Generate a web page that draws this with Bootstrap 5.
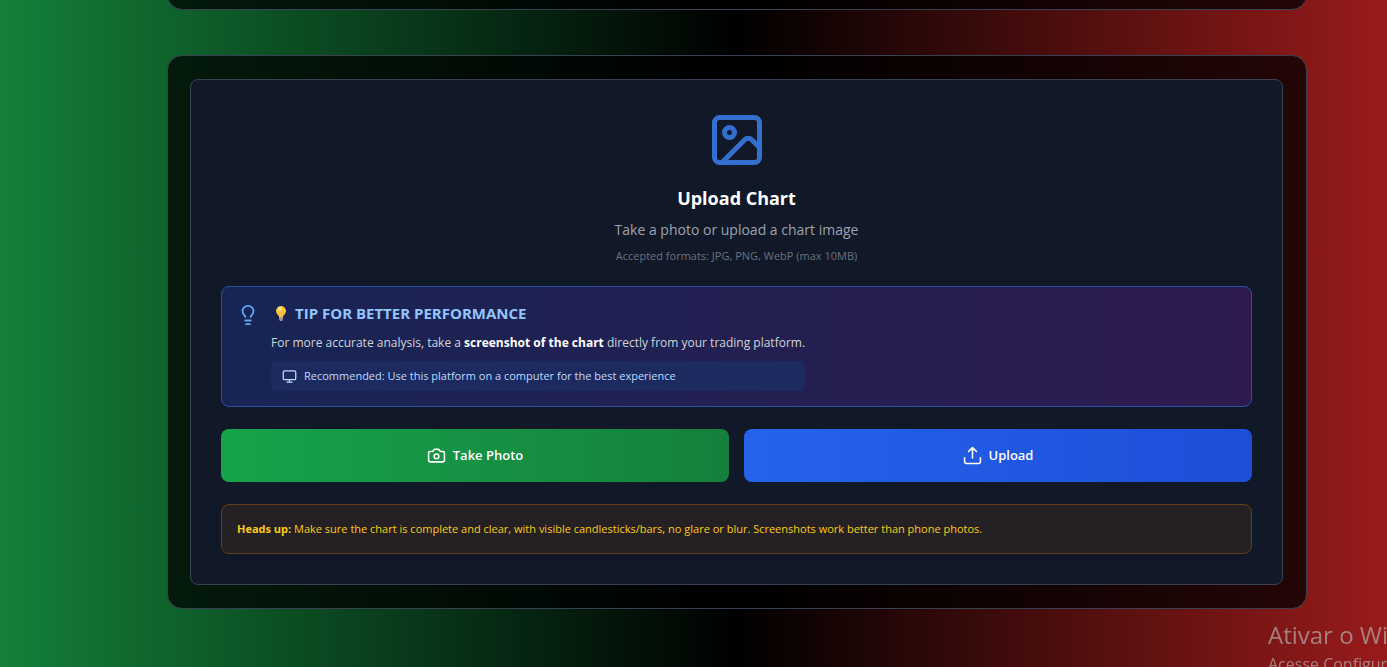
<!DOCTYPE html>
<html lang="en">
<head>
<meta charset="utf-8">
<meta name="viewport" content="width=device-width, initial-scale=1">
<title>Upload Chart</title>
<link href="https://cdn.jsdelivr.net/npm/bootstrap@5.3.0/dist/css/bootstrap.min.css" rel="stylesheet">
<style>
body{font-family:"Open Sans","Noto Sans",sans-serif;color:#fff;min-height:100vh;overflow:hidden;
 background:linear-gradient(90deg,#14803a 0%,#000 53%,#991b1b 100%) no-repeat}
main{display:flow-root;padding:0 80px 0 167px}
.shell{background:rgba(0,0,0,.73);border:1px solid #374151;border-radius:15px;padding:23px 23px 23px 22px}
.shell-prev{height:40px;padding:0;margin:-30px 0 45px}
.panel{background:#111827;border:1px solid #374151;border-radius:8px;padding:30px}
.hero-icon{width:60px;height:60px;color:#346fd0}
.title{font-size:18px;line-height:26px;font-weight:700;margin:15px 0 8px}
.sub{font-size:14px;line-height:22px;color:#9ca3af;margin-bottom:7px}
.formats{font-size:11px;line-height:15px;color:#6b7280;margin-bottom:23px}
.tip{border:1px solid #2a4fa3;border-radius:8px;background:linear-gradient(90deg,#172554,#2e1a4f);padding:15px;gap:12px}
.tip-icon{width:22px;height:22px;color:#60a5fa;margin-top:2px}
.tip h2{font-size:15px;line-height:22px;font-weight:700;color:#93c5fd;margin:0 0 8px}
.tip p{font-size:12px;line-height:22px;color:#d1d5db;margin:0 0 7px}
.tip p strong{color:#fff}
.rec{background:#1d2a60;color:#bfdbfe;font-size:11px;line-height:16px;border-radius:4px;padding:7px 11px;gap:7px}
.actions{gap:15px;margin:22px 0}
.action{height:53px;border:0;border-radius:8px;color:#fff;font-size:13px;font-weight:600;gap:7px}
.action:hover{color:#fff}
.take{background:linear-gradient(90deg,#16a34a,#15803d)}
.send{background:linear-gradient(90deg,#2563eb,#1d4ed8)}
.heads{background:#252023;border:1px solid #643e18;border-radius:8px;color:#facc15;font-size:11px;line-height:18px;padding:15px}
.mark-os{position:fixed;left:1268px;top:620px;white-space:nowrap;color:rgba(180,160,160,.75)}
.mark-os div{font-size:24px;line-height:30px}
.mark-os span{font-size:16px;line-height:28px;display:block}
svg{fill:none;stroke:currentColor;stroke-width:2;stroke-linecap:round;stroke-linejoin:round;flex:none}
.bulb{stroke:none}
</style>
</head>
<body>
<main>
<div class="shell shell-prev"></div>
<section class="shell">
<div class="panel">
<div class="text-center">
<svg class="hero-icon" viewBox="0 0 24 24"><rect x="3" y="3" width="18" height="18" rx="2"/><circle cx="9" cy="9" r="2"/><path d="m21 15-3.086-3.086a2 2 0 0 0-2.828 0L6 21"/></svg>
<h1 class="title">Upload Chart</h1>
<p class="sub">Take a photo or upload a chart image</p>
<p class="formats">Accepted formats: JPG, PNG, WebP (max 10MB)</p>
</div>
<div class="tip d-flex align-items-start">
<svg class="tip-icon" viewBox="0 0 24 24"><path d="M15 14c.2-1 .7-1.700 1.500-2.500 1-.9 1.500-2.200 1.500-3.500A6 6 0 0 0 6 8c0 1 .2 2.200 1.500 3.500.7.7 1.300 1.500 1.500 2.500M9 18h6M10 22h4"/></svg>
<div>
<h2 class="d-flex align-items-center"><svg class="bulb" width="20" height="18" viewBox="0 0 20 18"><path d="M10 2a5 5 0 0 0-5 5c0 3 3 4 3 6h4c0-2 3-3 3-6a5 5 0 0 0-5-5" fill="#fcc13b"/><circle cx="9" cy="5" r="2" fill="#ffe9a0"/><path d="M8 13h4v2l-1 2H9l-1-2z" fill="#a98d9c"/></svg><span class="ms-1">TIP FOR BETTER PERFORMANCE</span></h2>
<p>For more accurate analysis, take a <strong>screenshot of the chart</strong> directly from your trading platform.</p>
<div class="rec d-flex align-items-center"><svg width="15" height="15" viewBox="0 0 24 24"><rect x="2" y="3" width="20" height="14" rx="2"/><path d="M8 21h8M12 17v4"/></svg><span>Recommended: Use this platform on a computer for the best experience</span></div>
</div>
</div>
<div class="actions d-flex">
<button type="button" class="action take btn flex-fill w-50 d-flex align-items-center justify-content-center"><svg width="19" height="19" viewBox="0 0 24 24"><path d="M14.500 4h-5L7 7H4a2 2 0 0 0-2 2v9a2 2 0 0 0 2 2h16a2 2 0 0 0 2-2V9a2 2 0 0 0-2-2h-3z"/><circle cx="12" cy="13" r="3"/></svg><span>Take Photo</span></button>
<button type="button" class="action send btn flex-fill w-50 d-flex align-items-center justify-content-center"><svg width="19" height="19" viewBox="0 0 24 24"><path d="M12 15V2M7 7l5-5 5 5M2 15v5a2 2 0 0 0 2 2h16a2 2 0 0 0 2-2v-5"/></svg><span>Upload</span></button>
</div>
<div class="heads"><strong>Heads up:</strong> Make sure the chart is complete and clear, with visible candlesticks/bars, no glare or blur. Screenshots work better than phone photos.</div>
</div>
</section>
</main>
<div class="mark-os"><div>Ativar o Windows</div><span>Acesse Configurações</span></div>
<script src="https://cdn.jsdelivr.net/npm/bootstrap@5.3.0/dist/js/bootstrap.bundle.min.js"></script>
</body>
</html>
